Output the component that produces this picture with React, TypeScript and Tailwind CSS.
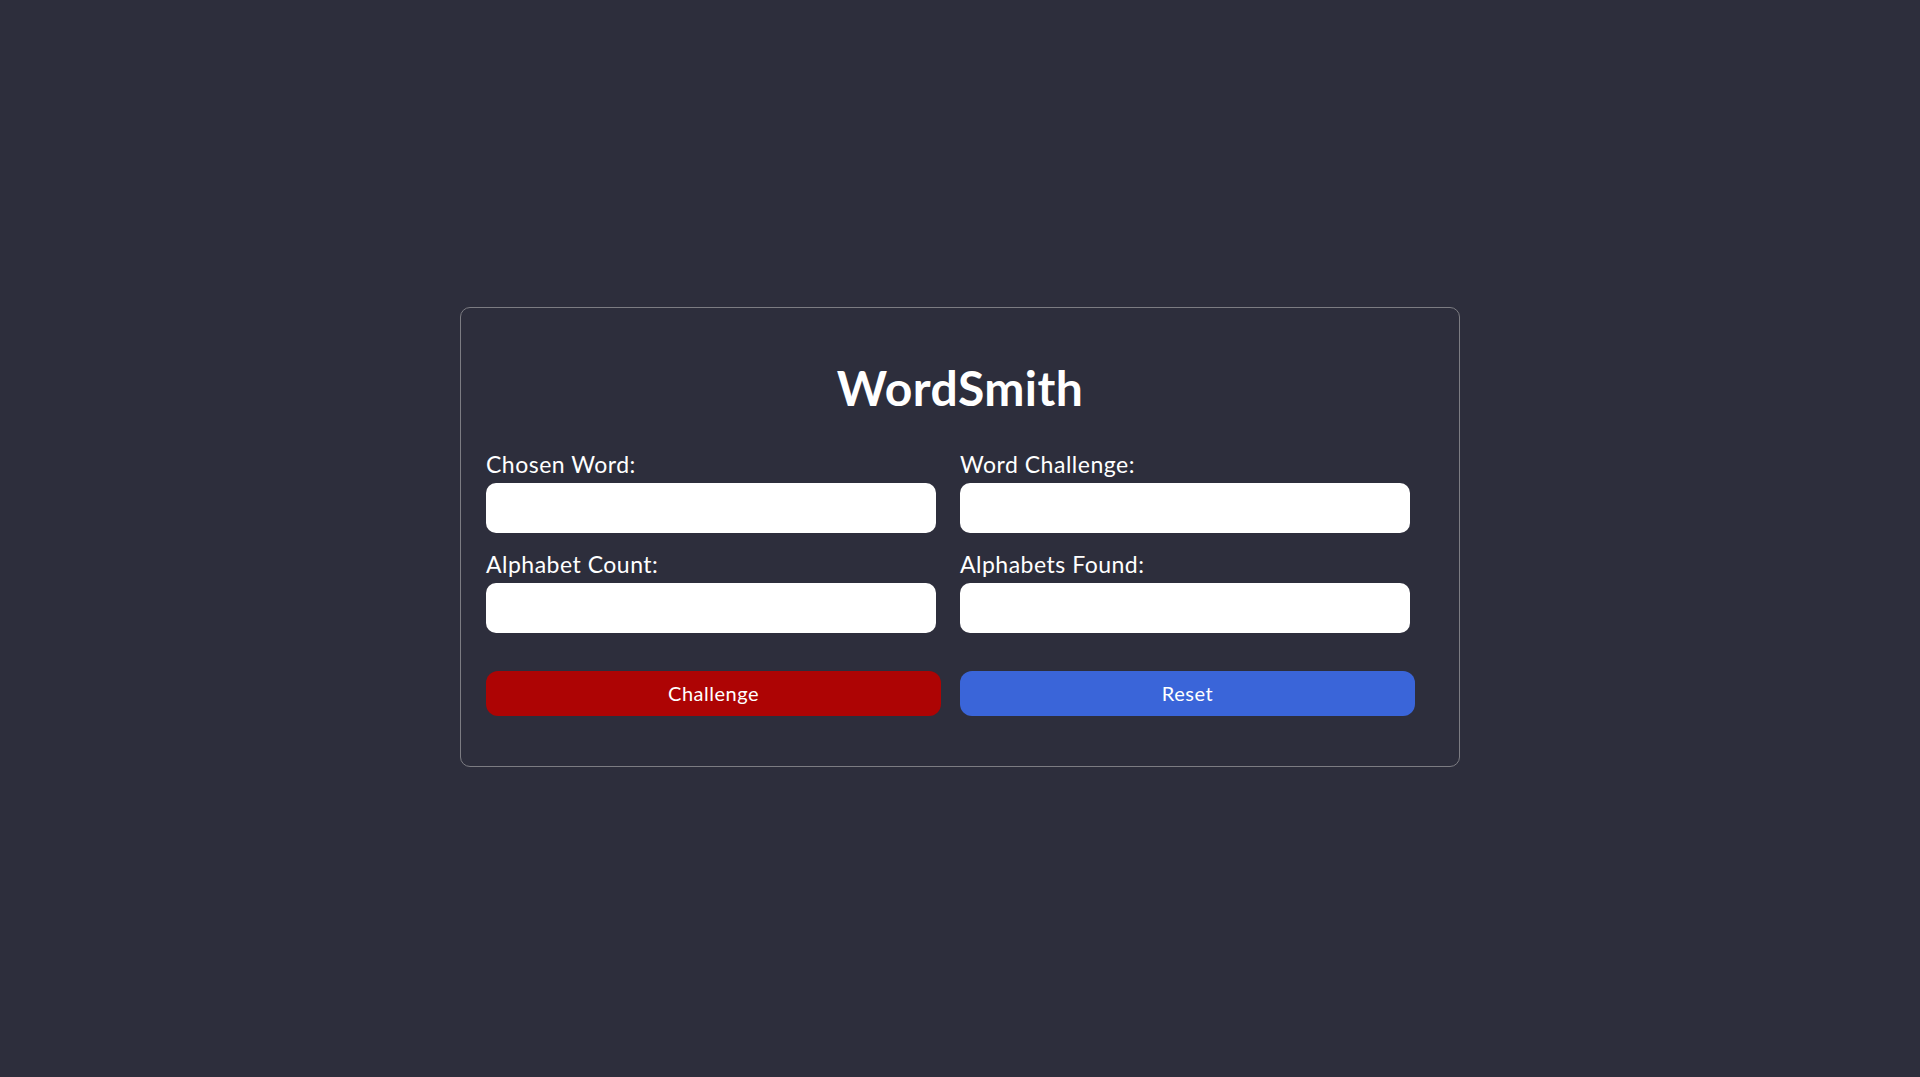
import React from 'react';

const fields = [
  { id: 'chosen', label: 'Chosen Word:' },
  { id: 'challenge', label: 'Word Challenge:' },
  { id: 'count', label: 'Alphabet Count:' },
  { id: 'found', label: 'Alphabets Found:' },
];

export default function App() {
  return (
    <div className="min-h-screen w-full bg-[#2d2e3c] flex items-center justify-center pb-[3px] font-['Lato',sans-serif]">
      <div className="w-[1000px] h-[460px] border border-[#7c7c82] rounded-[10px] pt-[56px] px-[25px]">
        <h1 className="text-center text-white font-bold text-[48px] leading-[48px] tracking-[0.4px] mb-[39px]">WordSmith</h1>

        <div className="grid grid-cols-[455px_455px] gap-x-[19px] gap-y-[18px]">
          {fields.map((f) => (
            <div key={f.id} className="flex flex-col">
              <label htmlFor={f.id} className="text-white text-[23px] leading-[26px] tracking-[0.5px] mb-[6px]">
                {f.label}
              </label>
              <input id={f.id} type="text" className="w-[450px] h-[50px] rounded-[10px] bg-white outline-none px-3" />
            </div>
          ))}
        </div>

        <div className="grid grid-cols-[455px_455px] gap-x-[19px] mt-[38px]">
          <button className="h-[45px] rounded-[12px] bg-[#ad0404] text-white text-[20px] tracking-[0.5px] pb-[2px]">Challenge</button>
          <button className="h-[45px] rounded-[12px] bg-[#3a65d9] text-white text-[20px] tracking-[0.5px] pb-[2px]">Reset</button>
        </div>
      </div>
    </div>
  );
}
